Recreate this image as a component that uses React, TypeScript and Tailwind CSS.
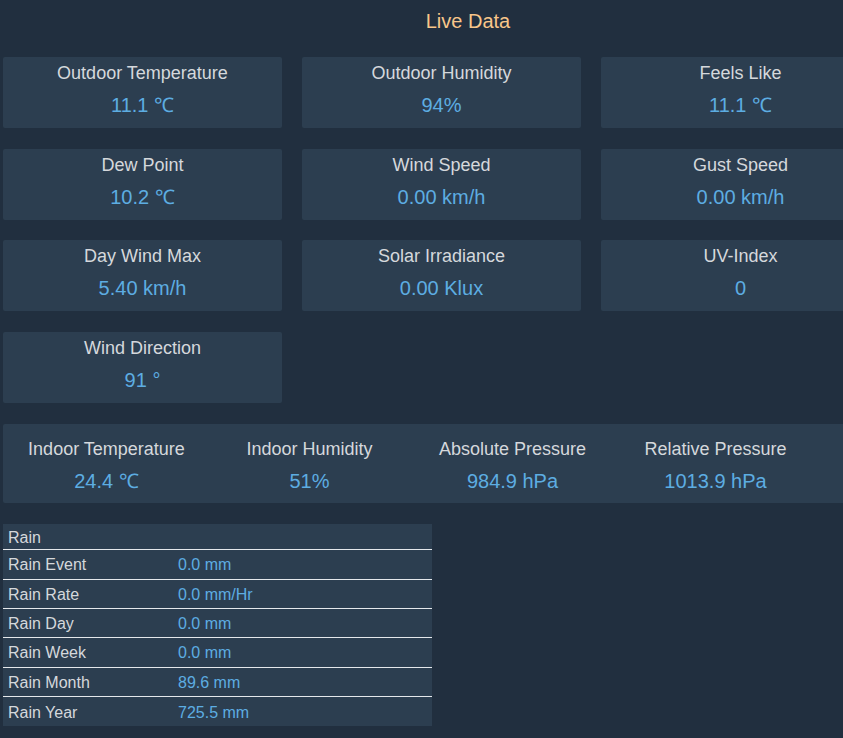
const cards = [
  { label: "Outdoor Temperature", value: "11.1 ℃" },
  { label: "Outdoor Humidity", value: "94%" },
  { label: "Feels Like", value: "11.1 ℃" },
  { label: "Dew Point", value: "10.2 ℃" },
  { label: "Wind Speed", value: "0.00 km/h" },
  { label: "Gust Speed", value: "0.00 km/h" },
  { label: "Day Wind Max", value: "5.40 km/h" },
  { label: "Solar Irradiance", value: "0.00 Klux" },
  { label: "UV-Index", value: "0" },
  { label: "Wind Direction", value: "91 °" },
];

const indoor = [
  { label: "Indoor Temperature", value: "24.4 ℃" },
  { label: "Indoor Humidity", value: "51%" },
  { label: "Absolute Pressure", value: "984.9 hPa" },
  { label: "Relative Pressure", value: "1013.9 hPa" },
];

const rain = [
  { label: "Rain Event", value: "0.0 mm" },
  { label: "Rain Rate", value: "0.0 mm/Hr" },
  { label: "Rain Day", value: "0.0 mm" },
  { label: "Rain Week", value: "0.0 mm" },
  { label: "Rain Month", value: "89.6 mm" },
  { label: "Rain Year", value: "725.5 mm" },
];

export default function App() {
  return (
    <div
      className="w-full min-h-screen overflow-hidden bg-[#212f3f]"
      style={{ fontFamily: '"Liberation Sans", Arial, sans-serif' }}
    >
      <div className="w-[936px] pb-4">
        <h1 className="h-[42px] text-center text-[20px] leading-[42px] text-[#f8c68a]">
          Live Data
        </h1>

        <div className="mt-[15px] pl-[3px] grid grid-cols-[279px_279px_279px] gap-x-[20px] gap-y-[20.67px]">
          {cards.map((c) => (
            <div
              key={c.label}
              className="h-[71px] rounded-[2px] bg-[#2c3e50] pt-[5px] text-center"
            >
              <div className="text-[18px] leading-[22px] text-[#d5d8dc]">
                {c.label}
              </div>
              <div className="mt-[7px] text-[20px] leading-[28px] text-[#5dade2]">
                {c.value}
              </div>
            </div>
          ))}
        </div>

        <div className="ml-[3px] mt-[20.67px] flex h-[79px] w-[877px] rounded-[2px] bg-[#2c3e50] pl-[2px] pt-[13px]">
          {indoor.map((c) => (
            <div key={c.label} className="w-[203px] text-center">
              <div className="text-[18px] leading-[24px] text-[#d5d8dc]">
                {c.label}
              </div>
              <div className="mt-[6px] text-[20px] leading-[28px] text-[#5dade2]">
                {c.value}
              </div>
            </div>
          ))}
        </div>

        <table className="ml-[3px] mt-[21px] w-[429px] border-collapse bg-[#2c3e50] text-[16px]">
          <tbody>
            <tr className="h-[26px] border-b border-[#e5e8eb]">
              <td colSpan={2} className="px-[5px] pt-[4px] leading-[20px] text-[#d5d8dc]">
                Rain
              </td>
            </tr>
            {rain.map((r, i) => (
              <tr
                key={r.label}
                className={
                  i < rain.length - 1
                    ? "h-[29.4px] border-b border-[#e5e8eb]"
                    : "h-[29.4px]"
                }
              >
                <td className="w-[175px] px-[5px] pt-[2px] leading-[20px] text-[#d5d8dc]">
                  {r.label}
                </td>
                <td className="pt-[2px] leading-[20px] text-[#5dade2]">{r.value}</td>
              </tr>
            ))}
          </tbody>
        </table>
      </div>
    </div>
  );
}
